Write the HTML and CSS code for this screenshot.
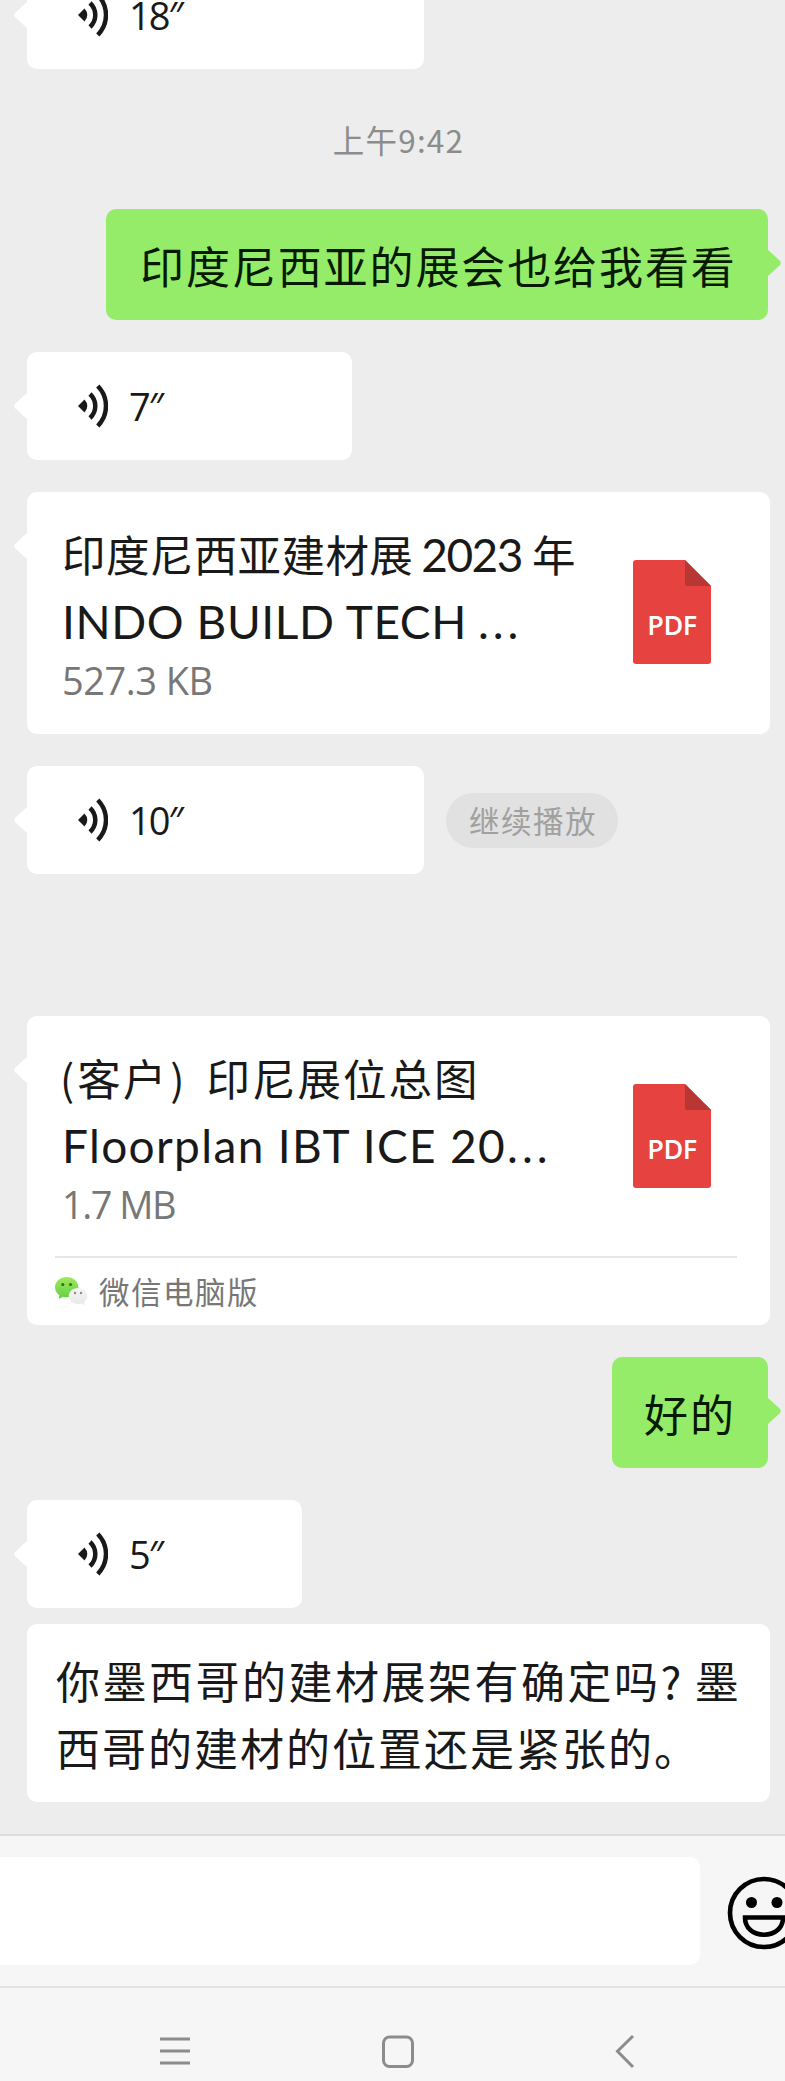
FILE: index.html
```html
<!DOCTYPE html>
<html lang="zh-CN">
<head>
<meta charset="utf-8">
<title>聊天</title>
<link rel="stylesheet" href="styles.css">
</head>
<body>
<svg class="defs" width="0" height="0" aria-hidden="true">
  <symbol id="voice" viewBox="0 0 30 44">
    <path d="M0 22 6.500 15.500Q9.300 18.500 9.300 22T6.500 28.500Z" fill="#191919"/>
    <path d="M12 10Q17.300 15 17.300 22T12 34M19.800 2Q28 10.500 28 22T19.800 42" fill="none" stroke="#191919" stroke-width="4.500"/>
  </symbol>
  <symbol id="tail" viewBox="0 0 14 28">
    <path d="M14 0 1.200 11.800Q-.6 14 1.200 16.200L14 28Z" fill="currentColor"/>
  </symbol>
  <symbol id="pdf" viewBox="0 0 78 104">
    <path d="M3 0H52L78 26V101Q78 104 75 104H3Q0 104 0 101V3Q0 0 3 0Z" fill="#e64340"/>
    <path d="M52 0 78 26H54Q52 26 52 24Z" fill="#b83633"/>
  </symbol>
</svg>
<main class="chat">
  <div class="bubble voice v18"><svg class="tail"><use href="#tail"/></svg><svg class="wave"><use href="#voice"/></svg><span class="secs">18″</span></div>
  <div class="time">上午9:42</div>
  <div class="bubble sent"><span>印度尼西亚的展会也给我看看</span><svg class="tail"><use href="#tail"/></svg></div>
  <div class="bubble voice v7"><svg class="tail"><use href="#tail"/></svg><svg class="wave"><use href="#voice"/></svg><span class="secs">7″</span></div>
  <section class="bubble card">
    <svg class="tail"><use href="#tail"/></svg>
    <div class="file">
      <div class="info">
        <div class="name">印度尼西亚建材展<span class="year">2023</span>年</div>
        <div class="name latin indo">INDO BUILD TECH<span class="dots">...</span></div>
        <div class="size kb">527.3 KB</div>
      </div>
      <div class="pdf"><svg><use href="#pdf"/></svg><span>PDF</span></div>
    </div>
  </section>
  <div class="row">
    <div class="bubble voice v10"><svg class="tail"><use href="#tail"/></svg><svg class="wave"><use href="#voice"/></svg><span class="secs">10″</span></div>
    <div class="pill">继续播放</div>
  </div>
  <section class="bubble card second">
    <svg class="tail"><use href="#tail"/></svg>
    <div class="file">
      <div class="info">
        <div class="name wide"><span class="paren open">(</span>客户<span class="paren close">)</span>印尼展位总图</div>
        <div class="name latin floor">Floorplan IBT ICE 20<span class="dots">...</span></div>
        <div class="size mb">1.7 MB</div>
      </div>
      <div class="pdf"><svg><use href="#pdf"/></svg><span>PDF</span></div>
    </div>
    <div class="source">
      <svg class="wechat" viewBox="0 0 33 28">
        <defs>
          <linearGradient id="green" x1="0" y1="0" x2="0" y2="1"><stop offset="0" stop-color="#a0e85c"/><stop offset="1" stop-color="#62cf45"/></linearGradient>
          <linearGradient id="pale" x1="0" y1="0" x2="0" y2="1"><stop offset="0" stop-color="#f5f5f5"/><stop offset="1" stop-color="#e9e9e9"/></linearGradient>
        </defs>
        <path d="M11.700 0C5.200 0 0 4.500 0 10.300c0 3.300 1.700 6.200 4.400 8L3.800 22l4.200-2.300c4 1.200 15.400 1.200 15.400-9.400C23.400 4.500 18.200 0 11.700 0Z" fill="url(#green)"/>
        <path d="M23 11c-5.200 0-9.200 3.600-9.200 8s4 8 9.200 8c1.200 0 2.400-.2 3.500-.6l3.200 1.500-.5-3c1.900-1.500 3-3.600 3-5.900 0-4.400-4-8-9.200-8Z" fill="url(#pale)"/>
        <g fill="#356d22"><circle cx="7.800" cy="7.500" r="1.600"/><circle cx="15.500" cy="7.500" r="1.600"/></g>
        <g fill="#8b8b8b"><circle cx="20" cy="16" r="1.200"/><circle cx="26" cy="16" r="1.200"/></g>
      </svg>
      <span>微信电脑版</span>
    </div>
  </section>
  <div class="bubble sent short"><span>好的</span><svg class="tail"><use href="#tail"/></svg></div>
  <div class="bubble voice v5"><svg class="tail"><use href="#tail"/></svg><svg class="wave"><use href="#voice"/></svg><span class="secs">5″</span></div>
  <div class="bubble transcript">
    <div class="first">你墨西哥的建材展架有确定吗<span class="ask">?</span>墨</div>
    <div>西哥的建材的位置还是紧张的。</div>
  </div>
</main>
<footer class="inputbar">
  <div class="input"></div>
  <svg class="emoji" viewBox="0 0 74 74">
    <circle cx="37" cy="37" r="34" fill="none" stroke="#000" stroke-width="4.600"/>
    <circle cx="24.500" cy="26.500" r="5.500"/><circle cx="50" cy="26.500" r="5.500"/>
    <path d="M18 41.500H56C56 52 48 58.800 37 58.800S18 52 18 41.500Z" fill="none" stroke="#000" stroke-width="4.600"/>
  </svg>
</footer>
<nav class="navbar">
  <svg viewBox="0 0 785 94" fill="none" stroke="#8c8c8c" stroke-width="3">
    <path d="M160 51H190M160 63H190M160 75H190"/>
    <rect x="383.500" y="49" width="29" height="29.500" rx="6"/>
    <path d="M633 48 617.500 63.300 633 79"/>
  </svg>
</nav>
</body>
</html>
```
FILE: styles.css
```css
* { box-sizing: border-box; }
body {
  margin: 0;
  width: 785px;
  height: 2081px;
  overflow: hidden;
  display: flex;
  flex-direction: column;
  background: #ededed;
  color: #191919;
  font-family: "Noto Sans CJK SC", sans-serif;
}
.defs { position: absolute; }
.chat {
  height: 1834px;
  flex: none;
  display: flex;
  flex-direction: column;
  align-items: flex-start;
  padding: 0 15px 0 27px;
}
.bubble {
  position: relative;
  flex: none;
  border-radius: 10px;
  background: #fff;
  white-space: nowrap;
}
.tail {
  position: absolute;
  width: 14px;
  height: 28px;
  left: -13px;
  top: 40px;
  color: #fff;
}
.voice {
  display: flex;
  align-items: center;
  height: 108px;
  padding-left: 51px;
}
.wave { width: 30px; height: 44px; }
.secs {
  margin-left: 21px;
  font: 38px/30px "Open Sans", sans-serif;
  letter-spacing: -2px;
}
.v18 { width: 397px; margin-top: -39px; }
.v7 { width: 325px; margin-top: 32px; }
.v10 { width: 397px; }
.v5 { width: 275px; margin-top: 32px; }
.time {
  align-self: center;
  margin-top: 47px;
  height: 46px;
  line-height: 46px;
  font-size: 31.5px;
  letter-spacing: 1.200px;
  color: #8c8c8c;
}
.sent {
  align-self: flex-end;
  width: 662px;
  height: 111px;
  margin: 47px 2px 0 0;
  padding-left: 34px;
  line-height: 113px;
  font-size: 44px;
  letter-spacing: 1.900px;
  background: #95ec69;
  color: #061a00;
}
.sent .tail {
  left: auto;
  right: -13px;
  color: #95ec69;
  transform: scaleX(-1);
}
.sent.short { width: 156px; margin-top: 32px; padding-left: 32px; }
.card { width: 743px; height: 242px; margin-top: 32px; }
.card.second { height: 309px; margin-top: 142px; }
.file { display: flex; justify-content: space-between; padding: 28px 59px 0 35px; height: 240px; }
.name { height: 67px; line-height: 67px; font-size: 43.5px; letter-spacing: .4px; }
.name.wide { letter-spacing: 2px; }
.name.latin { font-family: Lato, sans-serif; font-size: 46px; line-height: 69px; }
.indo { letter-spacing: .600px; }
.name.floor { letter-spacing: 1.350px; }
.dots { letter-spacing: 4px; }
.indo .dots { margin-left: 11px; }
.floor .dots { margin-left: 1px; }
.year { margin: 0 10px 0 8px; font-family: Lato, sans-serif; font-size: 46px; letter-spacing: -1.500px; }
.size { height: 52px; font: 38px/53px "Open Sans", sans-serif; color: #777; }
.kb { letter-spacing: -.500px; }
.mb { letter-spacing: -1.500px; }
.paren { font-size: 42px; }
.open { margin: 0 1px 0 -2px; }
.close { margin: 0 20px 0 2px; }
.pdf { position: relative; width: 78px; height: 104px; margin-top: 40px; }
.pdf svg { width: 78px; height: 104px; display: block; }
.pdf span {
  position: absolute;
  left: 0;
  top: 48px;
  width: 78px;
  text-align: center;
  font: 600 27px/34px "Open Sans", sans-serif;
  letter-spacing: -.5px;
  color: #fff;
}
.row { display: flex; align-items: center; gap: 22px; margin-top: 32px; }
.pill {
  width: 172px;
  height: 55px;
  border-radius: 28px;
  background: #e1e1e1;
  color: #a0a0a0;
  padding-left: 23px;
  line-height: 54px;
  font-size: 30.5px;
  letter-spacing: 1.500px;
  white-space: nowrap;
}
.source {
  margin: 0 33px 0 28px;
  border-top: 2px solid #e5e5e5;
  height: 68px;
  display: flex;
  align-items: center;
  gap: 11px;
  font-size: 30.5px;
  letter-spacing: 1.500px;
  color: #777;
}
.wechat { width: 33px; height: 28px; }
.transcript {
  width: 743px;
  height: 178px;
  margin-top: 16px;
  padding: 23px 0 0 29px;
  line-height: 67px;
  font-size: 44px;
  letter-spacing: 2px;
}
.first { letter-spacing: 2.500px; }
.ask { margin-right: 11px; }
.inputbar {
  flex: none;
  height: 152px;
  border-top: 2px solid #dcdcdc;
  background: #f6f6f6;
  display: flex;
  align-items: center;
  gap: 29px;
}
.input { flex: none; width: 700px; height: 108px; border-radius: 0 10px 10px 0; background: #fff; }
.emoji { flex: none; width: 74px; height: 74px; margin: 3px 0 0 -2px; }
.navbar { height: 95px; flex: none; border-top: 2px solid #e3e3e3; background: #f6f6f6; }
.navbar svg { display: block; width: 785px; height: 94px; }
```
